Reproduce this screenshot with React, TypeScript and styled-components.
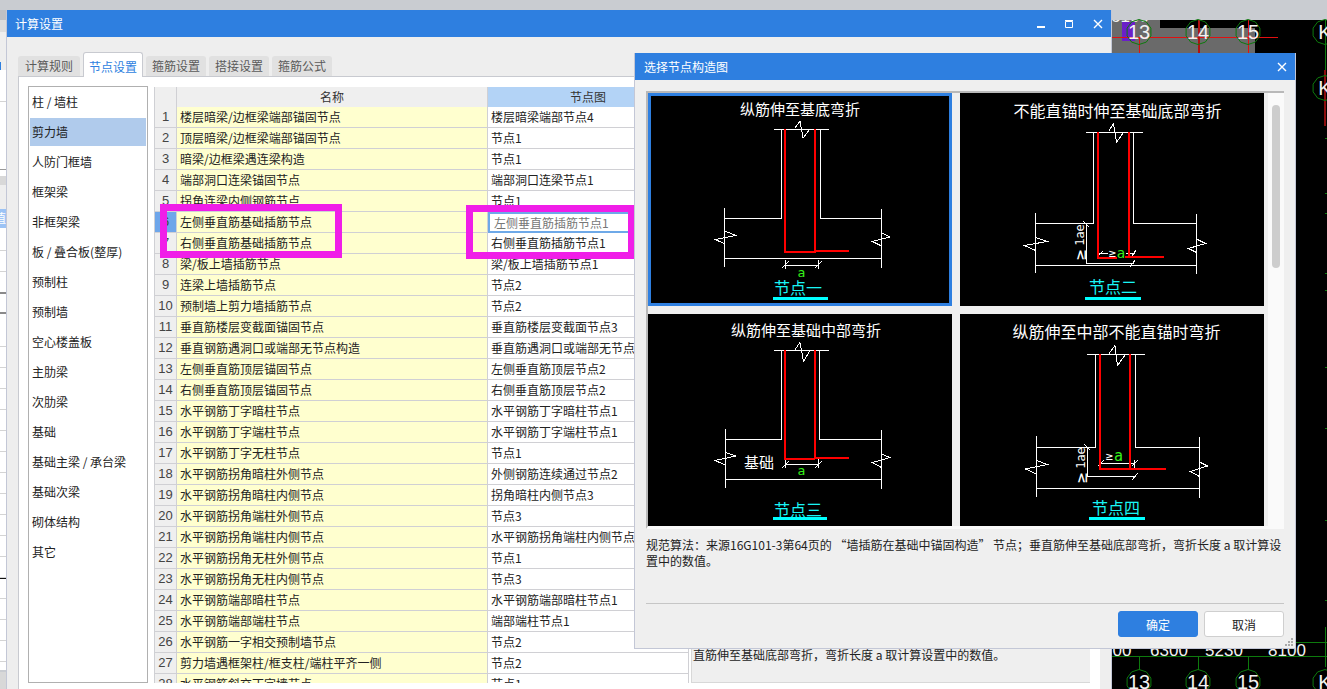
import React from "react";
import styled, { createGlobalStyle } from "styled-components";

const Global = createGlobalStyle`
  html, body { margin: 0; padding: 0; background: #c9ccd1; overflow: hidden; }
  body { font-family: "Noto Sans CJK SC", "Liberation Sans", sans-serif; font-size: 12px; color: #222; }
  * { box-sizing: border-box; }
`;

const Desktop = styled.div`
  position: relative;
  width: 1327px;
  height: 689px;
  overflow: hidden;
`;
const Backdrop = styled.svg`
  position: absolute;
  inset: 0;
  display: block;
`;
const CadNum = styled.text<{ $size: number }>`
  fill: #f2f2f2;
  font-family: "Liberation Sans", sans-serif;
  font-size: ${(p) => p.$size}px;
  text-anchor: middle;
`;
const StripGlyph = styled.text`
  fill: #fff;
  font-size: 12px;
`;

const Window = styled.section`
  position: absolute;
  left: 6px;
  top: 10px;
  width: 1106px;
  height: 679px;
  background: #eeeeee;
  border-left: 1px solid #c3c7d6;
  border-right: 1px solid #c3c7d6;
  display: flex;
  flex-direction: column;
  overflow: hidden;
`;
const TitleBar = styled.header`
  height: 27px;
  flex: none;
  background: #2e7fe0;
  color: #fff;
  display: flex;
  align-items: center;
  padding-left: 8px;
  font-size: 12px;
`;
const TitleText = styled.span`
  flex: 1;
`;
const WinIcon = styled.svg<{ $mr: number }>`
  width: 10px;
  height: 10px;
  margin-right: ${(p) => p.$mr}px;
  flex: none;
`;
const Tabs = styled.nav`
  display: flex;
  align-items: flex-end;
  gap: 3px;
  height: 39px;
  flex: none;
  padding-left: 11px;
`;
const Tab = styled.div<{ $active?: boolean; $w: number }>`
  width: ${(p) => p.$w}px;
  height: ${(p) => (p.$active ? 25 : 20)}px;
  padding-top: ${(p) => (p.$active ? 4 : 0)}px;
  margin-bottom: ${(p) => (p.$active ? -1 : 0)}px;
  line-height: 20px;
  text-align: center;
  border-radius: 3px 3px 0 0;
  background: ${(p) => (p.$active ? "#fff" : "#e1e1e1")};
  color: ${(p) => (p.$active ? "#2e7fe0" : "#5a5a5a")};
  border: ${(p) => (p.$active ? "1px solid #c8cad0" : "none")};
  border-bottom: none;
  position: relative;
  z-index: 1;
`;
const Panel = styled.div`
  flex: 1;
  margin-left: 11px;
  width: 1082px;
  min-height: 0;
  background: #fff;
  border-top: 1px solid #c8cad0;
  border-left: 1px solid #c8cad0;
  display: flex;
  padding: 9px 10px 6px 9px;
`;
const SideList = styled.ul`
  list-style: none;
  margin: 0 6px 0 0;
  width: 120px;
  height: 597px;
  flex: none;
  padding: 1px;
  border: 1px solid #b0b0b0;
`;
const SideItem = styled.li<{ $active?: boolean }>`
  height: 28px;
  margin-bottom: 2px;
  line-height: 28px;
  padding-left: 2px;
  color: #222;
  background: ${(p) => (p.$active ? "#b0cbec" : "transparent")};
`;
const TableArea = styled.div`
  width: 535px;
  height: 596px;
  margin-top: 1px;
  flex: none;
  overflow: hidden;
  border-left: 1px solid #cfd0d4;
`;
const Row = styled.div<{ $head?: boolean }>`
  display: grid;
  grid-template-columns: 22px 311px 1fr;
  height: ${(p) => (p.$head ? 20 : 21)}px;
`;
const IndexCell = styled.div<{ $current?: boolean }>`
  background: ${(p) => (p.$current ? "#6ea6ea" : "#efefef")};
  color: #444;
  font-family: "Liberation Sans", sans-serif;
  font-size: 13px;
  text-align: center;
  line-height: 20px;
  border-right: 1px solid #d0d0d4;
  border-bottom: 1px solid #d0d0d4;
`;
const HeadCell = styled.div<{ $current?: boolean }>`
  background: ${(p) => (p.$current ? "#b3d3f6" : "#efefef")};
  color: #333;
  text-align: center;
  line-height: 20px;
  border-right: 1px solid #d0d0d4;
  border-bottom: 1px solid #d0d0d4;
`;
const NameCell = styled.div`
  background: #ffffcf;
  line-height: 20px;
  padding-left: 3px;
  white-space: nowrap;
  overflow: hidden;
  border-right: 1px solid #d0d0d4;
  border-bottom: 1px solid #d0d0d4;
`;
const ValueCell = styled.div<{ $editing?: boolean }>`
  background: #fff;
  line-height: ${(p) => (p.$editing ? 17 : 20)}px;
  padding-left: ${(p) => (p.$editing ? 4 : 3)}px;
  white-space: nowrap;
  overflow: hidden;
  color: ${(p) => (p.$editing ? "#777" : "#222")};
  border: ${(p) => (p.$editing ? "2px solid #6ea9e8" : "none")};
  border-right: ${(p) => (p.$editing ? "2px solid #6ea9e8" : "1px solid #d0d0d4")};
  border-bottom: ${(p) => (p.$editing ? "2px solid #6ea9e8" : "1px solid #d0d0d4")};
`;
const Preview = styled.aside`
  width: 399px;
  height: 596px;
  margin: 1px 0 0 2px;
  flex: none;
  background: #efefef;
  border-left: 1px solid #d8d8d8;
  border-bottom: 1px solid #d8d8d8;
  display: flex;
  align-items: flex-end;
  padding: 0 0 19px 1px;
`;

const Mark = styled.div<{ $x: number; $y: number; $w: number; $h: number }>`
  position: absolute;
  left: ${(p) => p.$x}px;
  top: ${(p) => p.$y}px;
  width: ${(p) => p.$w}px;
  height: ${(p) => p.$h}px;
  border: 7px solid #f01ee8;
`;

const Dialog = styled.section`
  position: absolute;
  left: 634px;
  top: 53px;
  width: 662px;
  height: 596px;
  background: #efefef;
  border-left: 1px solid #c3c7d6;
  border-right: 1px solid #c3c7d6;
  border-bottom: 1px solid #c3c7d6;
  display: flex;
  flex-direction: column;
`;
const DialogTitle = styled(TitleBar)`
  padding-left: 9px;
`;
const Frame = styled.div`
  margin: 11px 11px 0;
  height: 438px;
  border-top: 2px solid #b9b9b9;
  border-left: 2px solid #b9b9b9;
  border-bottom: 3px solid #fafafa;
  display: flex;
  gap: 4px;
  flex: none;
`;
const CardGrid = styled.div`
  display: grid;
  grid-template-columns: 304px 304px;
  grid-template-rows: 213px 212px;
  gap: 8px;
  width: 616px;
  flex: none;
`;
const Card = styled.div<{ $selected?: boolean }>`
  background: #000;
  outline: ${(p) => (p.$selected ? "3px solid #2e7fe0" : "none")};
  outline-offset: -3px;
`;
const Scroll = styled.div`
  flex: 1;
  background: #fafafa;
  padding: 12px 4px 0;
`;
const Thumb = styled.div`
  height: 163px;
  border-radius: 4px;
  background: #cdcdcd;
`;
const Note = styled.p`
  margin: 8px 11px 0;
  line-height: 16px;
  font-size: 12px;
  color: #222;
  height: 58px;
`;
const Footer = styled.footer`
  margin: 8px 11px 0;
  border-top: 1px solid #c6c6c6;
  padding-top: 7px;
  display: flex;
  justify-content: flex-end;
  gap: 6px;
`;
const Btn = styled.button<{ $primary?: boolean }>`
  width: 80px;
  height: 26px;
  padding: 0;
  font: inherit;
  border-radius: 3px;
  border: 1px solid ${(p) => (p.$primary ? "#2e7fe0" : "#cfcfcf")};
  background: ${(p) => (p.$primary ? "#2e7fe0" : "#fff")};
  color: ${(p) => (p.$primary ? "#fff" : "#222")};
`;
const Grip = styled.svg`
  position: absolute;
  right: 1px;
  bottom: 1px;
  width: 9px;
  height: 9px;
`;

const Cad = styled.svg`
  display: block;
  width: 304px;
  height: 100%;
  font-family: "Noto Sans CJK SC", sans-serif;
`;
const CadTitle = styled.text`
  fill: #fff;
  text-anchor: middle;
`;
const CadCaption = styled.text`
  fill: #19f5f5;
  font-size: 16px;
  text-anchor: middle;
`;
const CadA = styled.text`
  fill: #35f01a;
  font-family: "DejaVu Sans Mono", monospace;
  text-anchor: middle;
`;
const CadDim = styled.text<{ $size: number }>`
  fill: #fff;
  font-family: "DejaVu Sans Mono", monospace;
  font-size: ${(p) => p.$size}px;
  text-anchor: middle;
`;

const side = [
  "柱 / 墙柱", "剪力墙", "人防门框墙", "框架梁", "非框架梁", "板 / 叠合板(整厚)", "预制柱", "预制墙",
  "空心楼盖板", "主肋梁", "次肋梁", "基础", "基础主梁 / 承台梁", "基础次梁", "砌体结构", "其它",
];
const rows: [string, string][] = [
  ["楼层暗梁/边框梁端部锚固节点", "楼层暗梁端部节点4"],
  ["顶层暗梁/边框梁端部锚固节点", "节点1"],
  ["暗梁/边框梁遇连梁构造", "节点1"],
  ["端部洞口连梁锚固节点", "端部洞口连梁节点1"],
  ["拐角连梁内侧钢筋节点", "节点1"],
  ["左侧垂直筋基础插筋节点", "左侧垂直筋插筋节点1"],
  ["右侧垂直筋基础插筋节点", "右侧垂直筋插筋节点1"],
  ["梁/板上墙插筋节点", "梁/板上墙插筋节点1"],
  ["连梁上墙插筋节点", "节点2"],
  ["预制墙上剪力墙插筋节点", "节点2"],
  ["垂直筋楼层变截面锚固节点", "垂直筋楼层变截面节点3"],
  ["垂直钢筋遇洞口或端部无节点构造", "垂直筋遇洞口或端部无节点构造1"],
  ["左侧垂直筋顶层锚固节点", "左侧垂直筋顶层节点2"],
  ["右侧垂直筋顶层锚固节点", "右侧垂直筋顶层节点2"],
  ["水平钢筋丁字暗柱节点", "水平钢筋丁字暗柱节点1"],
  ["水平钢筋丁字端柱节点", "水平钢筋丁字端柱节点1"],
  ["水平钢筋丁字无柱节点", "节点1"],
  ["水平钢筋拐角暗柱外侧节点", "外侧钢筋连续通过节点2"],
  ["水平钢筋拐角暗柱内侧节点", "拐角暗柱内侧节点3"],
  ["水平钢筋拐角端柱外侧节点", "节点3"],
  ["水平钢筋拐角端柱内侧节点", "水平钢筋拐角端柱内侧节点1"],
  ["水平钢筋拐角无柱外侧节点", "节点1"],
  ["水平钢筋拐角无柱内侧节点", "节点3"],
  ["水平钢筋端部暗柱节点", "水平钢筋端部暗柱节点1"],
  ["水平钢筋端部端柱节点", "端部端柱节点1"],
  ["水平钢筋一字相交预制墙节点", "节点2"],
  ["剪力墙遇框架柱/框支柱/端柱平齐一侧", "节点2"],
  ["水平钢筋斜交丁字墙节点", "节点1"],
];

type Shape = {
  view: string;
  selected?: boolean;
  title: [string, number, number, number];
  white: string[];
  red: string[];
  caption: [string, number, number];
  rule: [number, number, number];
  a: [number, number, number];
  lae?: [number, number, number];
  ge?: [number, number];
  extra?: [string, number, number];
};

const shapes: Shape[] = [
  {
    view: "648 93 304 213",
    selected: true,
    title: ["纵筋伸至基底弯折", 800, 115, 15],
    white: [
      "774,129.5 829,129.5", "795,128 800,121 803,138 810,129",
      "781.5,129.5 781.5,218.5 724.5,218.5", "820.5,129.5 820.5,218.5 881.5,218.5",
      "724.5,208 724.5,267", "881.5,209 881.5,268", "724.5,258.5 881.5,258.5",
      "724.5,231 736,235.5 715,239.5 724.5,243.5", "881.5,233 890,237 872.5,241.5 881.5,246",
      "785.5,265.5 818.5,265.5", "782,268 789,261", "815,268 822,261", "785.5,260 785.5,269", "818.5,260 818.5,269",
    ],
    red: ["785,129 785,251.5 816,251.5", "815,129 815,251", "815,250.5 849,250.5"],
    caption: ["节点一", 798, 294],
    rule: [773, 297, 55],
    a: [801.5, 277, 13],
  },
  {
    view: "960 93 304 213",
    title: ["不能直锚时伸至基础底部弯折", 1117.5, 117, 16],
    white: [
      "1086,132.5 1143,132.5", "1108.5,131.5 1113.5,123.5 1116.5,142.5 1123.5,132.5",
      "1093.5,132.5 1093.5,223.5 1035.5,223.5", "1133.5,132.5 1133.5,223.5 1196.5,223.5",
      "1035.5,213 1035.5,273", "1196.5,214 1196.5,274", "1035.5,265.5 1196.5,265.5",
      "1035.5,237.5 1047,241.5 1024.5,245.5 1035.5,250.5", "1196.5,239 1205.5,243.5 1188.5,248.5 1196.5,252.5",
      "1086.5,223.5 1086.5,263.5 1133.5,263.5", "1083,221 1089,227", "1130,267 1135,260",
      "1098,253.5 1108,253.5", "1126,253.5 1135,253.5", "1098,256 1103,251", "1132,256 1136,250",
    ],
    red: ["1097.5,132 1097.5,258 1116.5,258", "1129,132 1129,257", "1125,257 1164,257"],
    caption: ["节点二", 1113, 293],
    rule: [1085, 297, 56],
    a: [1121, 258, 14],
    lae: [1080, 235, 255],
    ge: [1112, 257],
  },
  {
    view: "648 314 304 212",
    title: ["纵筋伸至基础中部弯折", 806, 336, 15],
    white: [
      "774,350.5 829,350.5", "795,349.5 800,342.5 803.5,361.5 810,350.5",
      "781.5,350.5 781.5,439.5 725.5,439.5", "819.5,350.5 819.5,439.5 881.5,439.5",
      "725.5,429 725.5,487.5", "881.5,430 881.5,489", "725.5,479.5 881.5,479.5",
      "725.5,452.5 736,456 715,460.5 725.5,465", "881.5,454 890,457.5 872.5,462.5 881.5,467.5",
      "785.5,464.5 818.5,464.5", "782,468 789,461", "815,468 822,461", "785.5,459 785.5,468", "818.5,459 818.5,468",
    ],
    red: ["785,350 785,458.5 815,458.5", "815,350 815,458", "815,457.5 849,457.5"],
    caption: ["节点三", 798, 516],
    rule: [773, 517, 54],
    a: [801.5, 475, 13],
    extra: ["基础", 759, 468],
  },
  {
    view: "960 314 304 212",
    title: ["纵筋伸至中部不能直锚时弯折", 1116.5, 338, 16],
    white: [
      "1087,354.5 1145,354.5", "1109,353.5 1115,345.5 1117.5,365.5 1125,355",
      "1095.5,354.5 1095.5,447.5 1036.5,447.5", "1135.5,354.5 1135.5,447.5 1199.5,447.5",
      "1036.5,436 1036.5,497", "1199.5,437 1199.5,498", "1036.5,488.5 1199.5,488.5",
      "1036.5,460.5 1047.5,464.5 1025.5,469 1036.5,474", "1199.5,462 1207.5,466 1190.5,471.5 1199.5,476.5",
      "1087.5,447.5 1087.5,476.5 1135,476.5", "1084,444 1090,450", "1132,480 1138,473",
      "1100.5,463.5 1135,463.5", "1098,466 1104,460", "1132,466 1138,460", "1134.5,460 1134.5,468",
    ],
    red: ["1100,354 1100,468.5 1166,468.5", "1130,354 1130,468"],
    caption: ["节点四", 1116, 514],
    rule: [1089, 517, 56],
    a: [1118.5, 461, 15],
    lae: [1081, 458, 478],
    ge: [1109, 460],
  },
];

function Diagram({ s }: { s: Shape }) {
  return (
    <Cad viewBox={s.view} shapeRendering="crispEdges">
      <CadTitle x={s.title[1]} y={s.title[2]} fontSize={s.title[3]}>{s.title[0]}</CadTitle>
      {s.white.map((p) => (
        <polyline key={p} points={p} fill="none" stroke="#fff" strokeWidth="1" />
      ))}
      {s.red.map((p) => (
        <polyline key={p} points={p} fill="none" stroke="#ff0000" strokeWidth="2" />
      ))}
      <CadCaption x={s.caption[1]} y={s.caption[2]}>{s.caption[0]}</CadCaption>
      <rect x={s.rule[0]} y={s.rule[1]} width={s.rule[2]} height="3" fill="#00ffff" />
      <CadA x={s.a[0]} y={s.a[1]} fontSize={s.a[2]}>a</CadA>
      {s.ge && <CadDim $size={12} x={s.ge[0]} y={s.ge[1]}>≥</CadDim>}
      {s.lae && (
        <>
          <CadDim $size={12} transform={`translate(${s.lae[0]} ${s.lae[1]}) rotate(-90)`} y="4">1ae</CadDim>
          <CadDim $size={17} transform={`translate(${s.lae[0]} ${s.lae[2]}) rotate(-90)`} y="6">≥</CadDim>
        </>
      )}
      {s.extra && (
        <CadTitle x={s.extra[1]} y={s.extra[2]} fontSize="15">{s.extra[0]}</CadTitle>
      )}
    </Cad>
  );
}

const axes: [string, number][] = [["13", 1139], ["14", 1198], ["15", 1248]];
const ticks = [138, 193, 213, 273, 290, 367, 428, 520, 600];
const stripLines = [101, 250, 271, 346, 367, 388, 409, 430, 451, 472, 493, 514, 535, 556, 577, 598, 619, 640, 661];

function octagon(cx: number, cy: number, r: number) {
  const pts: string[] = [];
  for (let i = 0; i < 10; i++) {
    const t = (Math.PI * 2 * i) / 10 + Math.PI / 10;
    pts.push(`${(cx + r * Math.cos(t)).toFixed(1)},${(cy + r * Math.sin(t)).toFixed(1)}`);
  }
  return pts.join(" ");
}

function Bubble({ x, y, label }: { x: number; y: number; label: string }) {
  return (
    <g>
      <polygon points={octagon(x, y, 12.5)} fill="none" stroke="#0d7a0d" strokeWidth="1" />
      <CadNum $size={20} x={x} y={y + 7}>{label}</CadNum>
    </g>
  );
}

function Background() {
  return (
    <Backdrop width="1327" height="689" viewBox="0 0 1327 689">
      <rect width="1327" height="689" fill="#c9ccd1" />
      {/* application behind, left edge */}
      <rect x="0" y="10" width="6" height="10" fill="#bfc0c4" />
      <rect x="0" y="20" width="6" height="12" fill="#dddddd" />
      <rect x="0" y="32" width="6" height="38" fill="#eeeeee" />
      <rect x="0" y="62" width="1" height="10" fill="#2e7fe0" />
      <rect x="0" y="70" width="6" height="600" fill="#ffffff" />
      <rect x="0" y="169" width="6" height="1" fill="#999999" />
      <rect x="0" y="176" width="6" height="9" fill="#d8d8d8" />
      <rect x="0" y="185" width="6" height="24" fill="#eeeeee" />
      <rect x="0" y="209" width="6" height="19" fill="#9cc3f5" />
      <StripGlyph x="-6" y="223">值</StripGlyph>
      {stripLines.map((y) => (
        <rect key={y} x="0" y={y} width="6" height="1" fill="#d4d4d4" />
      ))}
      <rect x="0" y="292" width="6" height="2" fill="#8a8a8a" />
      <rect x="0" y="312" width="6" height="2" fill="#8a8a8a" />
      <rect x="0" y="578" width="6" height="1" fill="#111111" />
      <rect x="0" y="672" width="6" height="17" fill="#d8d8d8" />
      {/* CAD canvas */}
      <rect x="1112" y="20" width="215" height="669" fill="#000000" />
      <rect x="1112" y="20" width="48" height="8" fill="#6a6a6a" />
      <rect x="1112" y="28" width="143" height="25" fill="#6a6a6a" />
      <CadNum $size={17} x={1130} y={22}>6100</CadNum>
      <rect x="1112" y="0" width="215" height="20" fill="#c9ccd1" />
      <rect x="1122" y="22" width="13" height="19" fill="#6a1fc9" />
      <rect x="1112" y="37" width="166" height="1" fill="#e01010" />
      <rect x="1139" y="37" width="1" height="16" fill="#e01010" />
      <rect x="1198" y="20" width="2" height="33" fill="#b01010" />
      <rect x="1248" y="20" width="1" height="33" fill="#e01010" />
      <rect x="1325" y="20" width="1" height="56" fill="#0d7a0d" />
      <rect x="1324" y="70" width="2" height="56" fill="#8a0c0c" />
      {ticks.map((y) => (
        <rect key={y} x="1325" y={y} width="2" height="1" fill="#0d7a0d" />
      ))}
      {axes.map(([l, x]) => (
        <Bubble key={l} x={x} y={32} label={l} />
      ))}
      <Bubble x={1325} y={32} label="K" />
      <Bubble x={1325} y={88} label="K" />
      <CadNum $size={17} x={1122} y={656}>00</CadNum>
      <CadNum $size={17} x={1169} y={656}>6300</CadNum>
      <CadNum $size={17} x={1224} y={656}>5230</CadNum>
      <CadNum $size={17} x={1287} y={656}>8100</CadNum>
      <rect x="1112" y="656" width="215" height="1" fill="#0d7a0d" />
      <rect x="1296" y="642" width="31" height="1" fill="#0d7a0d" />
      <rect x="1325" y="627" width="1" height="40" fill="#0d7a0d" />
      {axes.map(([l, x]) => (
        <g key={l}>
          <rect x={x} y="656" width="1" height="14" fill="#0d7a0d" />
          <Bubble x={x} y={682} label={l} />
        </g>
      ))}
      <Bubble x={1325} y={682} label="K" />
    </Backdrop>
  );
}

export default function App() {
  return (
    <Desktop>
      <Global />
      <Background />
      <Window>
        <TitleBar>
          <TitleText>计算设置</TitleText>
          <WinIcon $mr={18} viewBox="0 0 10 10"><rect x="1" y="7" width="8" height="2" fill="#fff" /></WinIcon>
          <WinIcon $mr={19} viewBox="0 0 10 10"><path d="M1.5 2.5h7v6h-7z M1 1.5h8" fill="none" stroke="#fff" strokeWidth="1" /></WinIcon>
          <WinIcon $mr={8} viewBox="0 0 10 10"><path d="M1 1l8 8M9 1l-8 8" stroke="#fff" strokeWidth="1.4" /></WinIcon>
        </TitleBar>
        <Tabs>
          <Tab $w={62}>计算规则</Tab>
          <Tab $w={60} $active>节点设置</Tab>
          <Tab $w={60}>箍筋设置</Tab>
          <Tab $w={60}>搭接设置</Tab>
          <Tab $w={60}>箍筋公式</Tab>
        </Tabs>
        <Panel>
          <SideList>
            {side.map((t, i) => (
              <SideItem key={t} $active={i === 1}>{t}</SideItem>
            ))}
          </SideList>
          <TableArea>
            <Row $head>
              <HeadCell />
              <HeadCell>名称</HeadCell>
              <HeadCell $current>节点图</HeadCell>
            </Row>
            {rows.map(([n, v], i) => (
              <Row key={n}>
                <IndexCell $current={i === 5}>{i + 1}</IndexCell>
                <NameCell>{n}</NameCell>
                <ValueCell $editing={i === 5}>{v}</ValueCell>
              </Row>
            ))}
          </TableArea>
          <Preview>直筋伸至基础底部弯折，弯折长度 a 取计算设置中的数值。</Preview>
        </Panel>
      </Window>
      <Mark $x={160} $y={204} $w={182} $h={54} />
      <Mark $x={466} $y={205} $w={169} $h={54} />
      <Dialog>
        <DialogTitle>
          <TitleText>选择节点构造图</TitleText>
          <WinIcon $mr={8} viewBox="0 0 10 10"><path d="M1 1l8 8M9 1l-8 8" stroke="#fff" strokeWidth="1.4" /></WinIcon>
        </DialogTitle>
        <Frame>
          <CardGrid>
            {shapes.map((s) => (
              <Card key={s.view} $selected={s.selected}>
                <Diagram s={s} />
              </Card>
            ))}
          </CardGrid>
          <Scroll><Thumb /></Scroll>
        </Frame>
        <Note>规范算法：来源16G101-3第64页的 “墙插筋在基础中锚固构造” 节点；垂直筋伸至基础底部弯折，弯折长度 a 取计算设置中的数值。</Note>
        <Footer>
          <Btn $primary>确定</Btn>
          <Btn>取消</Btn>
        </Footer>
        <Grip viewBox="0 0 9 9">
          <path d="M6 0h2v2H6z M3 3h2v2H3z M6 3h2v2H6z M0 6h2v2H0z M3 6h2v2H3z M6 6h2v2H6z" fill="#a9a9a9" />
        </Grip>
      </Dialog>
    </Desktop>
  );
}
